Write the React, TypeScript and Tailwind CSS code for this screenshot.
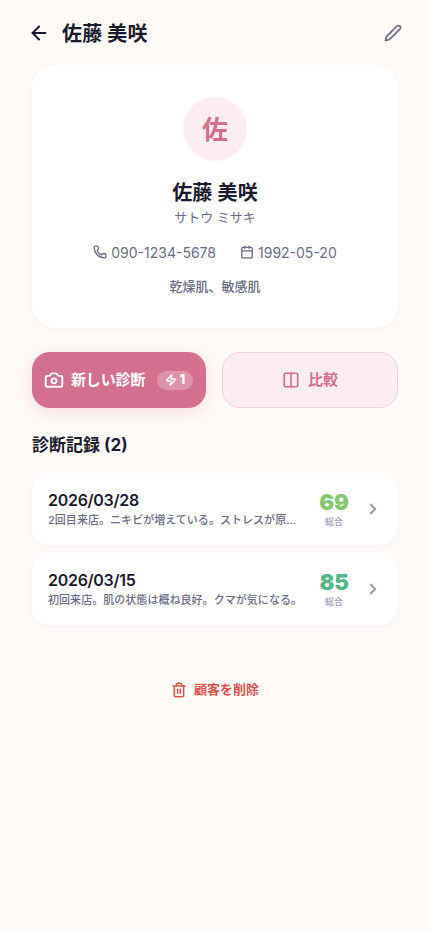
import {
  ArrowLeft,
  Calendar,
  Camera,
  ChevronRight,
  Columns2,
  Pen,
  Phone,
  Trash2,
  Zap,
} from 'lucide-react';

const customer = {
  name: '佐藤 美咲',
  kana: 'サトウ ミサキ',
  phone: '090-1234-5678',
  birthday: '1992-05-20',
  memo: '乾燥肌、敏感肌',
};

const records = [
  {
    date: '2026/03/28',
    note: '2回目来店。ニキビが増えている。ストレスが原因かもしれない。',
    score: 69,
    color: 'text-[#86c66f]',
  },
  {
    date: '2026/03/15',
    note: '初回来店。肌の状態は概ね良好。クマが気になる。',
    score: 85,
    color: 'text-[#56b68b]',
  },
];

function ProfileCard() {
  return (
    <section className="flex h-[263px] flex-col items-center rounded-3xl bg-white pt-8 shadow-[0_2px_8px_rgba(26,26,46,0.03)]">
      <div className="flex size-16 items-center justify-center rounded-full bg-[#fcedf3] pt-0.5 text-[26px] font-bold leading-none text-[#d36f8f]">
        {customer.name[0]}
      </div>
      <h2 className="mt-[17px] text-xl leading-[30px] font-bold tracking-[0.01em]">{customer.name}</h2>
      <p className="-mt-px text-[13px] leading-5 text-[#6b6b83]">{customer.kana}</p>
      <div className="mt-4 flex h-5 gap-6 text-sm leading-5 text-[#6b6b83]">
        <span className="flex gap-1">
          <Phone className="mt-0.5 size-3.5" strokeWidth={2.3} />
          {customer.phone}
        </span>
        <span className="flex gap-1">
          <Calendar className="mt-0.5 size-3.5" strokeWidth={2.3} />
          {customer.birthday}
        </span>
      </div>
      <p className="mt-[13px] text-[13px] leading-5 font-medium text-[#6b6b83]">{customer.memo}</p>
    </section>
  );
}

export default function App() {
  return (
    <main className="min-h-screen bg-[#fefaf7] px-8 font-['Inter','Noto_Sans_CJK_JP',sans-serif] text-[#1a1a2e]">
      <header className="-mr-1 flex h-[65px] items-center">
        <ArrowLeft className="-ml-1 mr-3 size-[22px]" strokeWidth={2.2} />
        <h1 className="flex-1 pt-0.5 text-xl font-bold tracking-[0.01em]">{customer.name}</h1>
        <Pen className="size-[18px] text-[#6b6b83]" strokeWidth={2.3} />
      </header>

      <ProfileCard />

      <div className="mt-6 flex h-14 gap-4 text-[15px] font-bold">
        <button className="flex w-[174px] items-center rounded-[18px] bg-[#d36f8f] pl-3 text-white shadow-[0_4px_16px_rgba(211,111,143,0.2)]">
          <Camera className="size-5" strokeWidth={2.3} />
          <span className="ml-[7px] tracking-[-0.01em]">新しい診断</span>
          <span className="ml-3 flex h-[19px] w-9 items-center justify-center gap-0.5 rounded-full bg-white/25 text-[13px] font-extrabold">
            <Zap className="size-3" strokeWidth={2.8} />1
          </span>
        </button>
        <button className="flex flex-1 items-center justify-center gap-2 rounded-[18px] border border-[#f1d0dd] bg-[#fcedf3] text-[#d36f8f]">
          <Columns2 className="size-[18px]" strokeWidth={2.2} />
          比較
        </button>
      </div>

      <h2 className="mt-[25px] text-[17px] leading-[25px] font-bold">診断記録 (2)</h2>

      <ul className="mt-[15px] space-y-2">
        {records.map((record) => (
          <li
            key={record.date}
            className="flex h-[72px] items-center rounded-[18px] bg-white pr-4 pl-4 shadow-[0_2px_8px_rgba(26,26,46,0.03)]"
          >
            <div className="w-[255px] pt-0.5">
              <p className="text-base leading-[19px] font-semibold tracking-[-0.018em]">{record.date}</p>
              <p className="truncate pt-px text-[11px] leading-[18px] font-medium tracking-[0.004em] text-[#6b6b83]">
                {record.note}
              </p>
            </div>
            <div className="ml-[13px] flex w-9 flex-col items-center">
              <span className={`text-[22px] leading-6 font-black tracking-[-0.01em] ${record.color}`}>{record.score}</span>
              <span className="pt-px text-[9px] leading-[13px] font-medium text-[#9a9ab0]">総合</span>
            </div>
            <ChevronRight className="ml-auto size-[18px] text-[#9a9ab0]" strokeWidth={2.6} />
          </li>
        ))}
      </ul>

      <button className="mx-auto mt-[55px] flex h-5 items-center gap-[7px] text-[13px] font-bold text-[#d9534f]">
        <Trash2 className="size-4" strokeWidth={2.3} />
        顧客を削除
      </button>
    </main>
  );
}
